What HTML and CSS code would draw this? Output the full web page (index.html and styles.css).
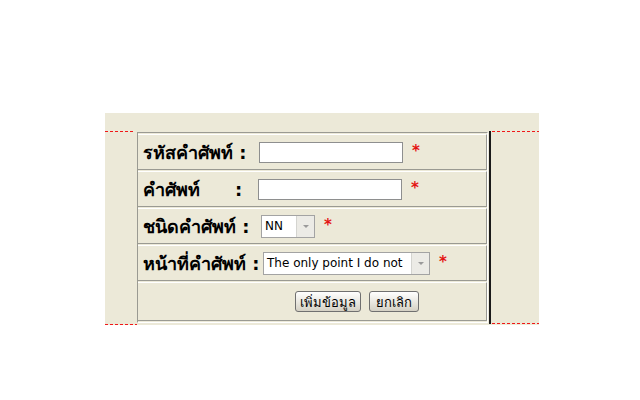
FILE: index.html
```html
<!DOCTYPE html>
<html lang="th">
<head>
<meta charset="utf-8">
<title>เพิ่มคำศัพท์</title>
<link rel="stylesheet" href="styles.css">
</head>
<body>
<div class="panel">
  <div class="frame">
    <table class="form">
      <tr>
        <td>
          <div class="row">
            <span class="lbl lbl-1">รหัสคำศัพท์ :</span>
            <input class="text" type="text">
            <span class="req">*</span>
          </div>
        </td>
      </tr>
      <tr>
        <td>
          <div class="row">
            <span class="lbl lbl-2">คำศัพท์</span><span class="lbl lbl-2c">:</span>
            <input class="text" type="text">
            <span class="req">*</span>
          </div>
        </td>
      </tr>
      <tr>
        <td>
          <div class="row">
            <span class="lbl lbl-3">ชนิดคำศัพท์ :</span>
            <div class="select sel-small"><span class="val">NN</span><span class="arrow"></span></div>
            <span class="req">*</span>
          </div>
        </td>
      </tr>
      <tr>
        <td>
          <div class="row">
            <span class="lbl lbl-4">หน้าที่คำศัพท์ :</span>
            <div class="select sel-wide"><span class="val">The only point I do not</span><span class="arrow"></span></div>
            <span class="req">*</span>
          </div>
        </td>
      </tr>
      <tr>
        <td class="actions">
          <div class="buttons">
            <button class="btn btn-add" type="button">เพิ่มข้อมูล</button>
            <button class="btn btn-cancel" type="button">ยกเลิก</button>
          </div>
        </td>
      </tr>
    </table>
    <div class="bar"></div>
  </div>
</div>
</body>
</html>
```

FILE: styles.css
```css
html, body {
  margin: 0;
  padding: 0;
  background: #ffffff;
}

body {
  font-family: Tahoma, "DejaVu Sans", "Noto Sans", sans-serif;
  color: #000;
}

.panel {
  margin: 113px 0 0 105px;
  width: 434px;
  height: 212px;
  padding-top: 18px;
  box-sizing: border-box;
  background-color: #ece9d8;
  background-image:
    repeating-linear-gradient(90deg, #f01818 0 3px, transparent 3px 5px),
    repeating-linear-gradient(90deg, #f01818 0 3px, transparent 3px 5px),
    repeating-linear-gradient(90deg, #f01818 0 3px, transparent 3px 5px),
    repeating-linear-gradient(90deg, #f01818 0 3px, transparent 3px 5px);
  background-size: 30px 1px, 32px 1px, 47px 1px, 47px 1px;
  background-position: 0 18px, 0 211px, 387px 18px, 387px 210px;
  background-repeat: no-repeat;
}

.frame {
  display: flex;
  height: 193px;
  padding-left: 32px;
}

.form {
  width: 351px;
  margin-top: 1px;
  height: 190px;
  border-collapse: separate;
  border-spacing: 0 1px;
  border-left: 1px solid #9a9a92;
  border-right: 1px solid #ffffff;
  border-top: 1px solid #9a9a92;
  border-bottom: 1px solid #ffffff;
}

.form td {
  padding: 0 0 0 5px;
  height: 34px;
  border-top: 1px solid #ffffff;
  border-bottom: 1px solid #9a9a92;
  border-right: 1px solid #9a9a92;
}

.form td.actions {
  height: 37px;
}

.row {
  display: flex;
  align-items: center;
}

.lbl {
  font-weight: bold;
  font-size: 18px;
  white-space: pre;
  flex: none;
}

.lbl-1 { width: 116px; }
.lbl-2 { width: 92px; }
.lbl-2c { width: 23px; }
.lbl-3 { width: 118px; }
.lbl-4 { width: 120px; }

.text {
  width: 144px;
  height: 21px;
  box-sizing: border-box;
  border: 1px solid #8e8f8f;
  background: #fff;
  padding: 0;
  margin: 0;
}

.req {
  color: #e41515;
  font-size: 15px;
  font-weight: bold;
  font-family: Tahoma, "DejaVu Sans", sans-serif;
  margin-left: 9px;
  line-height: 1;
  position: relative;
  top: -1px;
}

.select {
  display: flex;
  height: 23px;
  box-sizing: border-box;
  border: 1px solid #a3a3a3;
  background: #fff;
  align-items: stretch;
}

.select .val {
  flex: 1;
  font-family: Tahoma, "DejaVu Sans", sans-serif;
  font-size: 12px;
  line-height: 21px;
  padding-left: 3px;
  white-space: nowrap;
  overflow: hidden;
}

.select .arrow {
  width: 17px;
  background: #ecebe6;
  border-left: 1px solid #d4d4d0;
  position: relative;
}

.select .arrow::after {
  content: "";
  position: absolute;
  left: 6px;
  top: 9px;
  border-left: 3px solid transparent;
  border-right: 3px solid transparent;
  border-top: 3px solid #9a9a9a;
}

.sel-small {
  width: 54px;
}

.sel-wide {
  width: 167px;
}

.buttons {
  display: flex;
  gap: 8px;
  padding-left: 152px;
}

.btn {
  height: 21px;
  box-sizing: border-box;
  border: 1px solid #707070;
  border-radius: 3px;
  background: linear-gradient(#ffffff, #e6e4dc 60%, #d4d0c4);
  font-family: Tahoma, "DejaVu Sans", sans-serif;
  font-size: 13px;
  padding: 0;
  color: #000;
}

.btn-add {
  width: 66px;
}

.btn-cancel {
  width: 50px;
}

.bar {
  width: 2px;
  margin-left: 1px;
  background: #1a1a1a;
}
```
